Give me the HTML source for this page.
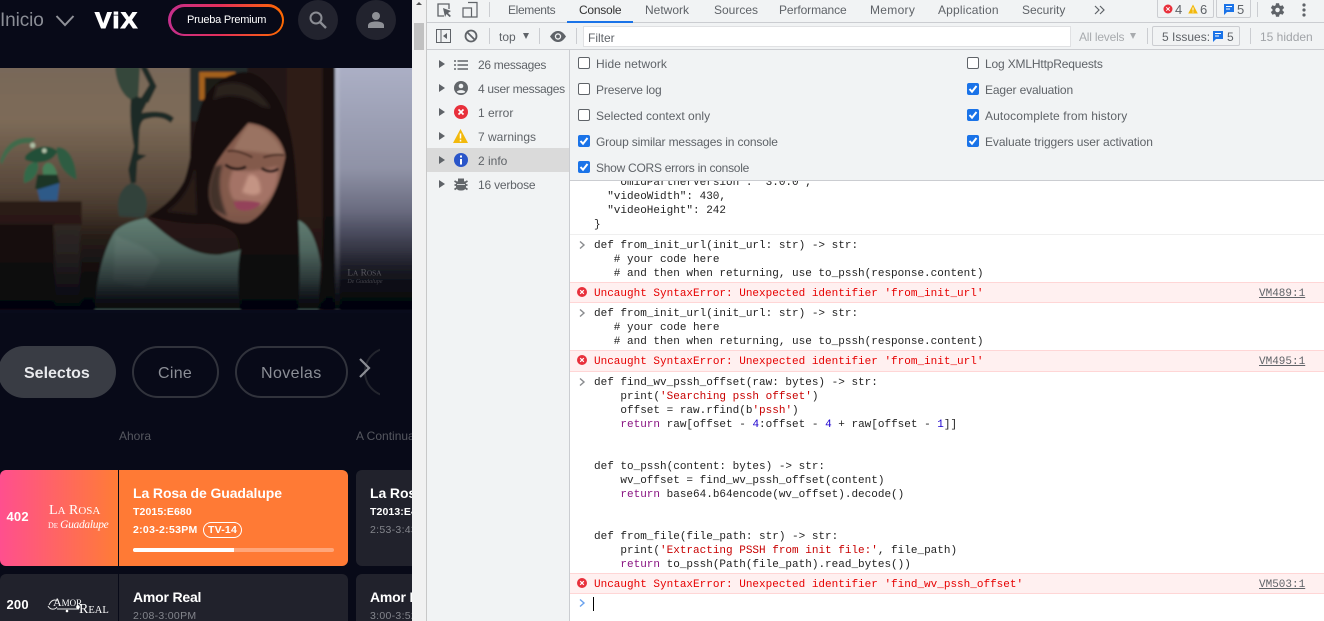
<!DOCTYPE html>
<html><head><meta charset="utf-8">
<style>
html,body{margin:0;padding:0;width:1324px;height:621px;overflow:hidden;background:#fff}
*{box-sizing:border-box}
.a,.t,.m,.s{position:absolute}
.t,.s,.m{white-space:pre}
.s{font:12px/16px "Liberation Sans",sans-serif;color:#5f6368}
.m{font:11px/14px "Liberation Mono",monospace;color:#222;left:594px}
.m b{font-weight:normal;color:#881280}
.m i{font-style:normal;color:#c80000}
.m u{text-decoration:none;color:#1c00cf}
.t{font-family:"Liberation Sans",sans-serif}
.box{position:absolute;width:12px;height:12px;border:1px solid #5f6368;border-radius:2px;background:#fff}
.ck{position:absolute;width:12px;height:12px;border-radius:2px;background:#1a73e8}
.ck svg{display:block}
.err{position:absolute;left:570px;width:754px;background:#fff0f0;border-top:1px solid #ffd6d6;border-bottom:1px solid #ffd6d6}
.tri{position:absolute;left:439px;width:0;height:0;border-left:6px solid #5f6368;border-top:4px solid transparent;border-bottom:4px solid transparent}
.line{position:absolute;background:#cbcdd1}
</style></head><body>

<!-- LEFT SITE -->
<div class="a" style="left:0;top:0;width:412px;height:621px;background:#080a18;overflow:hidden">
  <svg class="a" style="left:0;top:68px" width="412" height="245" viewBox="0 0 1236 735">
    <defs>
      <linearGradient id="wall" x1="0" y1="0" x2="0" y2="1"><stop offset="0" stop-color="#78685a"/><stop offset=".22" stop-color="#7d6b58"/><stop offset=".5" stop-color="#57473a"/><stop offset=".7" stop-color="#2c2119"/><stop offset="1" stop-color="#0e0a0a"/></linearGradient>
      <linearGradient id="win" x1="0" y1="0" x2="0" y2="1"><stop offset="0" stop-color="#acb0c6"/><stop offset=".42" stop-color="#8f92a6"/><stop offset=".68" stop-color="#55566a"/><stop offset=".88" stop-color="#202028"/><stop offset="1" stop-color="#08080e"/></linearGradient>
      <linearGradient id="fade" x1="0" y1="0" x2="0" y2="1"><stop offset="0" stop-color="#05060e" stop-opacity="0"/><stop offset=".6" stop-color="#05060e" stop-opacity="0"/><stop offset=".76" stop-color="#05060e" stop-opacity=".25"/><stop offset=".88" stop-color="#05060e" stop-opacity=".62"/><stop offset=".97" stop-color="#05060e" stop-opacity=".96"/><stop offset="1" stop-color="#05060e" stop-opacity="1"/></linearGradient>
      <filter id="b4"><feGaussianBlur stdDeviation="4"/></filter>
      <filter id="all" x="-2%" y="-2%" width="104%" height="104%"><feGaussianBlur stdDeviation="3.500"/></filter>
    </defs>
    <g filter="url(#all)">
      <rect x="-10" y="-10" width="610" height="745" fill="url(#wall)"/>
      <rect x="570" y="-10" width="450" height="745" fill="#241512"/>
      <rect x="860" y="-10" width="105" height="745" fill="#2e1c17"/>
      <rect x="970" y="-10" width="40" height="745" fill="#120c0b"/>
      <rect x="1005" y="-10" width="240" height="745" fill="url(#win)"/>
      <rect x="1005" y="-10" width="14" height="745" fill="#c8ccd8" opacity=".3"/>
      <rect x="572" y="-10" width="170" height="170" fill="#232b2b"/>
      <rect x="598" y="12" width="108" height="84" fill="#a4601c"/>
      <rect x="614" y="28" width="90" height="70" fill="#1b1a18"/>
      <!-- table -->
      <rect x="-10" y="400" width="255" height="72" fill="#2b1a14"/>
      <rect x="-10" y="470" width="170" height="265" fill="#1a110e"/>
      <rect x="165" y="470" width="75" height="250" fill="#332a27" filter="url(#b4)"/>
      <!-- statue -->
      <g fill="#1f2c26">
        <path d="M345 -5 C348 40 365 80 392 95 L415 85 L420 -5Z" fill="#36463a"/>
        <path d="M440 -5 L470 55 L445 105 L420 95 L448 50 L420 -5Z"/>
        <path d="M392 95 C388 150 395 200 402 235 L385 305 L392 345 L408 345 L412 280 L440 262 L415 258 L418 190 C420 170 425 160 432 155 C460 145 490 145 512 165 L522 150 C500 128 460 128 425 135 L445 95 L410 85Z"/>
      </g>
      <path d="M358 445 C345 400 362 355 395 345 C440 355 452 410 430 450Z" fill="#31423b"/>
      <!-- plant -->
      <path d="M0 280 C15 225 55 200 108 212 L88 226 C55 222 22 245 6 290Z" fill="#3f6a4c"/>
      <path d="M72 345 C68 305 85 280 112 282 C122 310 100 340 72 345Z" fill="#33694a"/>
      <path d="M128 300 C140 270 165 285 172 322 C165 348 145 352 130 338Z" fill="#447f59"/>
      <path d="M170 238 C202 235 226 270 230 335 C198 322 170 290 170 238Z" fill="#2e5c42"/>
      <path d="M75 265 C100 235 150 225 172 250 C160 282 110 292 75 275Z" fill="#234f38"/>
      <path d="M105 362 L112 320 L172 320 L180 345 L125 368Z" fill="#1b3527"/>
      <circle cx="98" cy="232" r="8" fill="#aebfa5"/><circle cx="133" cy="248" r="7" fill="#b5c4ac"/>
      <path d="M112 365 L178 345 L172 398 L120 398Z" fill="#2d5a88"/>
      <!-- sweater -->
      <path d="M285 735 C285 640 312 540 345 490 C370 465 410 455 440 450 C490 490 560 565 660 560 L715 548 L890 455 C925 465 950 510 962 590 L955 735Z" fill="#668478"/>
      <path d="M345 500 C380 520 440 530 480 580 L430 660 L340 640Z" fill="#7b978c" opacity=".5" filter="url(#b4)"/>
      <!-- neck -->
      <path d="M440 452 C490 490 560 565 660 558 L718 545 L700 470 L600 430 L470 430Z" fill="#2b1913"/>
      <!-- hair -->
      <path d="M735 12 C665 15 612 70 598 130 C578 200 572 290 552 340 C525 390 485 420 445 445 C500 462 565 468 620 468 C690 470 722 500 722 545 C710 600 715 680 722 735 L893 735 C905 620 897 460 888 330 C882 230 865 130 820 70 C795 35 770 15 735 12Z" fill="#171010"/>
      <path d="M650 55 C705 28 770 50 812 120 L785 115 C745 85 685 72 640 95Z" fill="#2c231f" filter="url(#b4)"/>
      <path d="M500 430 C545 400 570 360 585 300 L590 440Z" fill="#2c1d18" filter="url(#b4)"/>
      <!-- face -->
      <path d="M745 165 C700 215 662 260 645 295 C628 340 618 385 640 425 C670 458 712 470 745 464 C792 442 832 380 856 268 C852 220 812 170 745 165Z" fill="#835a4c"/>
      <path d="M745 170 C790 172 835 210 852 262 L700 245 C715 215 730 190 745 170Z" fill="#9a7362" filter="url(#b4)"/>
      <path d="M700 305 C740 315 790 305 832 295 C840 345 812 400 782 412 L700 395 C680 360 688 330 700 305Z" fill="#a47366" filter="url(#b4)"/>
      <path d="M745 322 C770 312 782 342 782 372 C770 386 745 382 726 372Z" fill="#c49484" filter="url(#b4)"/>
      <path d="M645 295 C628 340 618 385 640 425 L682 445 C656 385 652 335 668 290Z" fill="#42302a" filter="url(#b4)"/>
      <path d="M682 250 C702 245 732 255 757 268" stroke="#3a2119" stroke-width="5" fill="none"/>
      <path d="M790 268 C810 262 835 258 852 262" stroke="#3a2119" stroke-width="5" fill="none"/>
      <path d="M676 290 C695 306 720 306 738 296" stroke="#130c0c" stroke-width="8" fill="none"/>
      <path d="M785 300 C800 313 820 313 835 302" stroke="#130c0c" stroke-width="8" fill="none"/>
      <path d="M700 402 C720 397 760 397 782 405 C765 430 725 434 708 420Z" fill="#94425a"/>
      <rect x="-10" y="-10" width="1256" height="735" fill="url(#fade)"/>
    </g>
    <rect y="725" width="1236" height="10" fill="#090b1b"/>
    <text x="1042" y="622" font-family="Liberation Serif,serif" font-size="28" fill="#8c8c90" opacity=".55">L<tspan font-size="22">A</tspan> R<tspan font-size="22">OSA</tspan></text>
    <text x="1042" y="645" font-family="Liberation Serif,serif" font-size="18" font-style="italic" fill="#77777c" opacity=".5">De Guadalupe</text>
  </svg>

  <!-- top bar -->
  <div class="a" style="left:0;top:0;width:412px;height:68px;background:#080a18"></div>
  <div class="t" style="left:0;top:9px;font-size:19px;line-height:24px;color:#8b8e96;letter-spacing:-.1px">Inicio</div>
  <svg class="a" style="left:55px;top:14px" width="20" height="13"><path d="M1.500 2 L10 11 L18.500 2" stroke="#8f9198" stroke-width="2" fill="none"/></svg>
  <div class="t" style="left:95px;top:8px;font-size:22px;line-height:26px;font-weight:bold;color:#fff;-webkit-text-stroke:1px #fff;letter-spacing:1.300px;transform:scaleX(1.12);transform-origin:left">ViX</div>
  <div class="a" style="left:168px;top:4px;width:116px;height:32px;border-radius:16px;background:linear-gradient(90deg,#c42f8c 0%,#e42f5a 45%,#ff6a00 100%)"></div>
  <div class="a" style="left:170.500px;top:6.500px;width:111px;height:27px;border-radius:14px;background:#080a18"></div>
  <div class="t" style="left:187px;top:13px;font-size:11px;line-height:14px;color:#fff;letter-spacing:-.24px">Prueba Premium</div>
  <div class="a" style="left:298px;top:0;width:40px;height:40px;border-radius:50%;background:#22232e"></div>
  <svg class="a" style="left:308px;top:10px" width="20" height="20"><circle cx="8" cy="8" r="5.500" stroke="#8b8d94" stroke-width="2" fill="none"/><path d="M12 12 L18 18" stroke="#8b8d94" stroke-width="2.400"/></svg>
  <div class="a" style="left:356px;top:0;width:40px;height:40px;border-radius:50%;background:#22232e"></div>
  <svg class="a" style="left:367px;top:11px" width="18" height="18"><circle cx="9" cy="5" r="4" fill="#8e9096"/><path d="M1 17 V14.500 C1 11.500 5 10.500 9 10.500 C13 10.500 17 11.500 17 14.500 V17Z" fill="#8e9096"/></svg>

  <!-- chips -->
  <div class="a" style="left:-2px;top:346px;width:118px;height:52px;border-radius:26px;background:#393c44"></div>
  <div class="t" style="left:24px;top:365px;font-size:16px;line-height:18px;font-weight:bold;color:#e8e9ec">Selectos</div>
  <div class="a" style="left:132px;top:346px;width:87px;height:52px;border-radius:26px;border:2px solid #31333c"></div>
  <div class="t" style="left:158px;top:365px;font-size:16px;line-height:18px;color:#8b8e96;letter-spacing:.3px">Cine</div>
  <div class="a" style="left:235px;top:346px;width:113px;height:52px;border-radius:26px;border:2px solid #31333c"></div>
  <div class="t" style="left:261px;top:365px;font-size:16px;line-height:18px;color:#8b8e96;letter-spacing:.4px">Novelas</div>
  <div class="a" style="left:364px;top:347px;width:16px;height:50px;overflow:hidden"><div style="width:60px;height:50px;border-radius:25px;border:2px solid #23252e"></div></div>
  <svg class="a" style="left:358px;top:357px" width="14" height="22"><path d="M2 2 L11 11 L2 20" stroke="#8c8e95" stroke-width="2.200" fill="none"/></svg>

  <div class="t" style="left:119px;top:428px;font-size:12px;line-height:16px;color:#55575f">Ahora</div>
  <div class="t" style="left:356px;top:428px;font-size:12px;line-height:16px;color:#55575f">A Continuación</div>

  <!-- row 1 -->
  <div class="a" style="left:0;top:470px;width:118px;height:96px;border-radius:6px 0 0 6px;background:linear-gradient(90deg,#ff4f8e,#ff7c36)"></div>
  <div class="a" style="left:119px;top:470px;width:229px;height:96px;border-radius:0 6px 6px 0;background:#ff7a35"></div>
  <div class="t" style="left:6.500px;top:509px;font-size:13px;line-height:16px;font-weight:bold;color:#fff;letter-spacing:.2px">402</div>
  <div class="t" style="left:49px;top:503px;font-family:'Liberation Serif',serif;font-size:14px;line-height:16px;color:#fff">L<span style="font-size:11px">A</span> R<span style="font-size:11px">OSA</span></div>
  <div class="t" style="left:48px;top:519px;font-family:'Liberation Serif',serif;font-size:8px;line-height:12px;color:#fff">D<span style="font-size:7px">E</span> <span style="font-size:11.500px;font-style:italic;letter-spacing:-.3px">Guadalupe</span></div>
  <div class="t" style="left:133px;top:484px;font-size:14px;line-height:18px;font-weight:bold;color:#fff;letter-spacing:-.1px">La Rosa de Guadalupe</div>
  <div class="t" style="left:133px;top:505px;font-size:10.500px;line-height:14px;font-weight:bold;color:#fff;letter-spacing:.1px">T2015:E680</div>
  <div class="t" style="left:133px;top:523px;font-size:10.500px;line-height:14px;font-weight:bold;color:#fff;letter-spacing:.3px">2:03-2:53PM</div>
  <div class="t" style="left:203px;top:522px;width:39px;height:16px;border:1px solid #fff;border-radius:8px;font-size:10.500px;line-height:15px;text-align:center;font-weight:bold;color:#fff;letter-spacing:.2px">TV-14</div>
  <div class="a" style="left:133px;top:548px;width:201px;height:4px;border-radius:2px;background:#ffa67a"></div>
  <div class="a" style="left:133px;top:548px;width:101px;height:4px;border-radius:2px 0 0 2px;background:#fff"></div>
  <!-- row 1 right -->
  <div class="a" style="left:356px;top:470px;width:230px;height:96px;border-radius:6px;background:#21222c"></div>
  <div class="t" style="left:370px;top:484px;font-size:14px;line-height:18px;font-weight:bold;color:#fff;letter-spacing:-.1px">La Rosa de Guadalupe</div>
  <div class="t" style="left:370px;top:505px;font-size:10.500px;line-height:14px;font-weight:bold;color:#fff;letter-spacing:.1px">T2013:E401</div>
  <div class="t" style="left:370px;top:523px;font-size:10.500px;line-height:14px;color:#83858c;letter-spacing:.3px">2:53-3:43PM</div>
  <!-- row 2 -->
  <div class="a" style="left:0;top:574px;width:118px;height:60px;border-radius:6px 0 0 0;background:#21222c"></div>
  <div class="a" style="left:119px;top:574px;width:229px;height:60px;border-radius:0 6px 0 0;background:#21222c"></div>
  <div class="t" style="left:6.500px;top:597px;font-size:13px;line-height:16px;font-weight:bold;color:#fff;letter-spacing:.2px">200</div>
  <div class="t" style="left:53px;top:595px;font-family:'Liberation Serif',serif;font-size:12px;line-height:14px;color:#fff">A<span style="font-size:9px">MOR</span></div>
  <div class="t" style="left:79px;top:603px;font-family:'Liberation Serif',serif;font-size:14px;line-height:14px;color:#fff">R<span style="font-size:10.500px">EAL</span></div>
  <svg class="a" style="left:47px;top:597px" width="42" height="20"><path d="M2 8 C4 3 8 2 10 4 M1 9 C3 13 8 13 10 10 M10 12 L32 12" stroke="#e8e8e8" stroke-width="1" fill="none"/><circle cx="20" cy="14" r="1.300" fill="#fff"/><circle cx="31" cy="10" r="1.800" fill="#fff"/></svg>
  <div class="t" style="left:133px;top:588px;font-size:14px;line-height:18px;font-weight:bold;color:#fff;letter-spacing:-.2px">Amor Real</div>
  <div class="t" style="left:133px;top:609px;font-size:10.500px;line-height:14px;color:#83858c;letter-spacing:.3px">2:08-3:00PM</div>
  <div class="a" style="left:356px;top:574px;width:230px;height:60px;border-radius:6px;background:#21222c"></div>
  <div class="t" style="left:370px;top:588px;font-size:14px;line-height:18px;font-weight:bold;color:#fff;letter-spacing:-.2px">Amor Real</div>
  <div class="t" style="left:370px;top:609px;font-size:10.500px;line-height:14px;color:#83858c;letter-spacing:.3px">3:00-3:52PM</div>
</div>

<!-- scrollbar -->
<div class="a" style="left:412px;top:0;width:14px;height:621px;background:#f1f1f1"></div>
<div class="a" style="left:414px;top:23px;width:10px;height:27px;background:#c1c1c1"></div>
<div class="a" style="left:416px;top:2px;width:0;height:0;border-left:3px solid transparent;border-right:3px solid transparent;border-bottom:3px solid #505050"></div>
<div class="line" style="left:426px;top:0;width:1px;height:621px;background:#c8c8c8"></div>

<!-- DEVTOOLS -->
<div class="a" style="left:427px;top:0;width:897px;height:181px;background:#f1f3f4"></div>
<div class="a" style="left:427px;top:49px;width:143px;height:572px;background:#f1f3f4"></div>
<div class="line" style="left:427px;top:22px;width:897px;height:1px"></div>
<div class="line" style="left:427px;top:49px;width:897px;height:1px"></div>
<div class="line" style="left:569px;top:50px;width:1px;height:571px"></div>
<div class="line" style="left:570px;top:180px;width:754px;height:1px"></div>

<!-- top tabs -->
<svg class="a" style="left:436px;top:2px" width="16" height="16"><path d="M8 14 H2 V2 H13 V7" stroke="#5f6368" stroke-width="1.300" fill="none"/><path d="M7 6 L15 9 L12 11 L15 14 L13.500 15 L10.500 12 L9 15Z" fill="#5f6368"/></svg>
<svg class="a" style="left:462px;top:1px" width="16" height="17"><path d="M6 1.500 H15 V16 H10 M1 7 H9.500 V16 H1Z" stroke="#5f6368" stroke-width="1.200" fill="none"/></svg>
<div class="line" style="left:489px;top:2px;width:1px;height:15px"></div>
<div class="s" style="left:508px;top:2px;letter-spacing:-.35px">Elements</div>
<div class="s" style="left:579px;top:2px;color:#333;letter-spacing:-.25px">Console</div>
<div class="a" style="left:567px;top:21px;width:66px;height:2px;background:#1a73e8"></div>
<div class="s" style="left:645px;top:2px">Network</div>
<div class="s" style="left:714px;top:2px">Sources</div>
<div class="s" style="left:779px;top:2px;letter-spacing:-.1px">Performance</div>
<div class="s" style="left:870px;top:2px;letter-spacing:.3px">Memory</div>
<div class="s" style="left:938px;top:2px;letter-spacing:.18px">Application</div>
<div class="s" style="left:1022px;top:2px">Security</div>
<svg class="a" style="left:1094px;top:5px" width="11" height="10"><path d="M1 1 L5 5 L1 9 M6 1 L10 5 L6 9" stroke="#5f6368" stroke-width="1.200" fill="none"/></svg>

<div class="a" style="left:1157px;top:-2px;width:57px;height:20px;border:1px solid #cbcdd1;border-radius:2px"></div>
<svg class="a" style="left:1163px;top:4px" width="10" height="10"><circle cx="5" cy="5" r="4.500" fill="#e8303b"/><path d="M3.300 3.300 L6.700 6.700 M6.700 3.300 L3.300 6.700" stroke="#fff" stroke-width="1"/></svg>
<div class="s" style="left:1175px;top:2px;font-size:13px">4</div>
<svg class="a" style="left:1188px;top:4px" width="10" height="10"><path d="M5 .5 L9.800 9.500 H.2Z" fill="#f2b90c"/><path d="M5 3.500 V6.500 M5 7.500 V8.500" stroke="#fff" stroke-width="1"/></svg>
<div class="s" style="left:1200px;top:2px;font-size:13px">6</div>
<div class="a" style="left:1216px;top:-2px;width:35px;height:20px;border:1px solid #cbcdd1;border-radius:2px"></div>
<svg class="a" style="left:1223px;top:3px" width="12" height="13"><path d="M1 1 H11 V9 H4 L1 12Z" fill="#1a73e8"/><path d="M3 3.500 H9 M3 6 H7" stroke="#fff" stroke-width="1"/></svg>
<div class="s" style="left:1237px;top:2px;font-size:13px">5</div>
<div class="line" style="left:1257px;top:2px;width:1px;height:15px"></div>
<svg class="a" style="left:1267.500px;top:1px" width="18" height="18" viewBox="0 0 24 24"><path fill="#5f6368" d="M19.400 13a7.500 7.500 0 0 0 0-2l2.200-1.700-2.100-3.600-2.600 1a7.500 7.500 0 0 0-1.700-1L14.800 3h-4.200l-.4 2.700a7.500 7.500 0 0 0-1.700 1l-2.600-1-2.100 3.600L6 11a7.500 7.500 0 0 0 0 2l-2.200 1.700 2.100 3.600 2.600-1a7.500 7.500 0 0 0 1.700 1l.4 2.700h4.200l.4-2.700a7.500 7.500 0 0 0 1.700-1l2.600 1 2.100-3.600zM12.700 15a3 3 0 1 1 0-6 3 3 0 0 1 0 6z"/></svg>
<svg class="a" style="left:1302px;top:3px" width="4" height="14"><circle cx="2" cy="2" r="1.600" fill="#5f6368"/><circle cx="2" cy="7" r="1.600" fill="#5f6368"/><circle cx="2" cy="12" r="1.600" fill="#5f6368"/></svg>

<!-- toolbar -->
<svg class="a" style="left:436px;top:29px" width="16" height="15"><path d="M.5 .5 H14.500 V13.500 H.5Z M5 .5 V13.500" stroke="#5f6368" stroke-width="1" fill="none"/><path d="M11 4 L7 7 L11 10Z" fill="#5f6368"/></svg>
<svg class="a" style="left:464px;top:29px" width="14" height="14"><circle cx="7" cy="7" r="5.500" stroke="#5f6368" stroke-width="1.800" fill="none"/><path d="M3 3 L11 11" stroke="#5f6368" stroke-width="1.800"/></svg>
<div class="line" style="left:489px;top:28px;width:1px;height:16px"></div>
<div class="s" style="left:499px;top:29px">top</div>
<div class="a" style="left:523px;top:33px;width:0;height:0;border-left:3.500px solid transparent;border-right:3.500px solid transparent;border-top:6px solid #5f6368"></div>
<div class="line" style="left:539px;top:28px;width:1px;height:16px"></div>
<svg class="a" style="left:550px;top:31px" width="16" height="11"><path d="M0 5.500 C3 1 5.500 0 8 0 C10.500 0 13 1 16 5.500 C13 10 10.500 11 8 11 C5.500 11 3 10 0 5.500Z" fill="#5f6368"/><circle cx="8" cy="5.500" r="3.200" fill="#f1f3f4"/><circle cx="8" cy="5.500" r="1.900" fill="#5f6368"/></svg>
<div class="line" style="left:576px;top:28px;width:1px;height:16px"></div>
<div class="a" style="left:583px;top:26px;width:488px;height:21px;background:#fff;border:1px solid #e0e1e3"></div>
<div class="s" style="left:588px;top:30px">Filter</div>
<div class="s" style="left:1079px;top:29px;color:#a8abae;letter-spacing:-.2px">All levels</div>
<div class="a" style="left:1130px;top:33px;width:0;height:0;border-left:3.500px solid transparent;border-right:3.500px solid transparent;border-top:6px solid #a8abae"></div>
<div class="line" style="left:1147px;top:28px;width:1px;height:16px"></div>
<div class="a" style="left:1152px;top:26px;width:88px;height:20px;border:1px solid #cbcdd1;border-radius:2px"></div>
<div class="s" style="left:1162px;top:29px">5 Issues:</div>
<svg class="a" style="left:1212px;top:30px" width="12" height="13"><path d="M1 1 H11 V9 H4 L1 12Z" fill="#1a73e8"/><path d="M3 3.500 H9 M3 6 H7" stroke="#fff" stroke-width="1"/></svg>
<div class="s" style="left:1227px;top:29px">5</div>
<div class="line" style="left:1250px;top:28px;width:1px;height:16px"></div>
<div class="s" style="left:1260px;top:29px;color:#a1a4a8">15 hidden</div>

<!-- sidebar -->
<div class="a" style="left:427px;top:148px;width:142px;height:24px;background:#dadada"></div>
<div class="tri" style="top:60px"></div><div class="tri" style="top:84px"></div><div class="tri" style="top:108px"></div><div class="tri" style="top:132px"></div><div class="tri" style="top:156px"></div><div class="tri" style="top:180px"></div>
<svg class="a" style="left:454px;top:59px" width="14" height="12"><path d="M0 2 H2 M3.500 2 H14 M0 6 H2 M3.500 6 H14 M0 10 H2 M3.500 10 H14" stroke="#85888c" stroke-width="2"/></svg>
<svg class="a" style="left:454px;top:81px" width="14" height="14"><circle cx="7" cy="7" r="7" fill="#62666a"/><circle cx="7" cy="5" r="2.300" fill="#f1f3f4"/><path d="M2.800 11 C3.500 8.500 10.500 8.500 11.200 11 C10 12.500 4 12.500 2.800 11Z" fill="#f1f3f4"/></svg>
<svg class="a" style="left:454px;top:105px" width="14" height="14"><circle cx="7" cy="7" r="7" fill="#e8303b"/><path d="M4.500 4.500 L9.500 9.500 M9.500 4.500 L4.500 9.500" stroke="#fff" stroke-width="1.700"/></svg>
<svg class="a" style="left:453px;top:129px" width="15" height="14"><path d="M7.500 0 L15 14 H0Z" fill="#f2b90c"/><path d="M7.500 4.500 V9.500 M7.500 10.800 V12.500" stroke="#fff" stroke-width="1.500"/></svg>
<svg class="a" style="left:454px;top:153px" width="14" height="14"><circle cx="7" cy="7" r="7" fill="#2a55c9"/><path d="M7 6 V11.500 M7 2.500 V4.500" stroke="#fff" stroke-width="2"/></svg>
<svg class="a" style="left:454px;top:177px" width="14" height="14"><path d="M4 1.500 H10 V5 H4Z" fill="#62666a"/><rect x="2" y="3.500" width="10" height="10" rx="4" fill="#62666a"/><path d="M.5 4 L3 5.500 M13.500 4 L11 5.500 M.5 8 H3 M13.500 8 H11 M.5 12.500 L3.500 10.500 M13.500 12.500 L10.500 10.500" stroke="#62666a" stroke-width="1.800"/><path d="M3 7.500 H11" stroke="#f1f3f4" stroke-width=".8"/></svg>
<div class="s" style="left:478px;top:57px;letter-spacing:-.3px">26 messages</div>
<div class="s" style="left:478px;top:81px;letter-spacing:-.3px">4 user messages</div>
<div class="s" style="left:478px;top:105px">1 error</div>
<div class="s" style="left:478px;top:129px">7 warnings</div>
<div class="s" style="left:478px;top:153px">2 info</div>
<div class="s" style="left:478px;top:177px;letter-spacing:-.2px">16 verbose</div>

<!-- settings -->
<div class="box" style="left:578px;top:57px"></div><div class="s" style="left:596px;top:56px;letter-spacing:.08px">Hide network</div>
<div class="box" style="left:578px;top:83px"></div><div class="s" style="left:596px;top:82px;letter-spacing:-.15px">Preserve log</div>
<div class="box" style="left:578px;top:109px"></div><div class="s" style="left:596px;top:108px">Selected context only</div>
<div class="ck" style="left:578px;top:135px"><svg width="12" height="12"><path d="M2.500 6 L5 8.700 L9.500 3" stroke="#fff" stroke-width="2" fill="none"/></svg></div><div class="s" style="left:596px;top:134px;letter-spacing:-.15px">Group similar messages in console</div>
<div class="ck" style="left:578px;top:161px"><svg width="12" height="12"><path d="M2.500 6 L5 8.700 L9.500 3" stroke="#fff" stroke-width="2" fill="none"/></svg></div><div class="s" style="left:596px;top:160px;letter-spacing:-.26px">Show CORS errors in console</div>
<div class="box" style="left:967px;top:57px"></div><div class="s" style="left:985px;top:56px;letter-spacing:-.16px">Log XMLHttpRequests</div>
<div class="ck" style="left:967px;top:83px"><svg width="12" height="12"><path d="M2.500 6 L5 8.700 L9.500 3" stroke="#fff" stroke-width="2" fill="none"/></svg></div><div class="s" style="left:985px;top:82px;letter-spacing:-.13px">Eager evaluation</div>
<div class="ck" style="left:967px;top:109px"><svg width="12" height="12"><path d="M2.500 6 L5 8.700 L9.500 3" stroke="#fff" stroke-width="2" fill="none"/></svg></div><div class="s" style="left:985px;top:108px;letter-spacing:.12px">Autocomplete from history</div>
<div class="ck" style="left:967px;top:135px"><svg width="12" height="12"><path d="M2.500 6 L5 8.700 L9.500 3" stroke="#fff" stroke-width="2" fill="none"/></svg></div><div class="s" style="left:985px;top:134px;letter-spacing:-.09px">Evaluate triggers user activation</div>

<!-- console -->
<div class="a" style="left:570px;top:181px;width:754px;height:440px;overflow:hidden;background:#fff"></div>
<div class="a" style="left:570px;top:181px;width:754px;height:10px;overflow:hidden"><div class="m" style="left:43.800px;top:-5px">"omidPartnerVersion": "3.0.0",</div></div>
<div class="m" style="left:607.200px;top:190px">"videoWidth": 430,</div>
<div class="m" style="left:607.200px;top:204px">"videoHeight": 242</div>
<div class="m" style="top:218px">}</div>
<div class="a" style="left:570px;top:234px;width:754px;height:1px;background:#efefef"></div>

<svg class="a" style="left:579px;top:241px" width="7" height="8"><path d="M1 .5 L5 4 L1 7.500" stroke="#8a8c8f" stroke-width="1.400" fill="none"/></svg>
<div class="m" style="top:239px">def from_init_url(init_url: str) -&gt; str:
   # your code here
   # and then when returning, use to_pssh(response.content)</div>
<div class="err" style="top:282px;height:21px"></div>
<svg class="a" style="left:577px;top:287px" width="10" height="10"><circle cx="5" cy="5" r="5" fill="#e8303b"/><path d="M3.200 3.200 L6.800 6.800 M6.800 3.200 L3.200 6.800" stroke="#fff" stroke-width="1.200"/></svg>
<div class="m" style="top:287px;color:#e60000">Uncaught SyntaxError: Unexpected identifier 'from_init_url'</div>
<div class="m" style="left:1259px;top:287px;color:#5f6368;text-decoration:underline">VM489:1</div>

<svg class="a" style="left:579px;top:309px" width="7" height="8"><path d="M1 .5 L5 4 L1 7.500" stroke="#8a8c8f" stroke-width="1.400" fill="none"/></svg>
<div class="m" style="top:307px">def from_init_url(init_url: str) -&gt; str:
   # your code here
   # and then when returning, use to_pssh(response.content)</div>
<div class="err" style="top:350px;height:22px"></div>
<svg class="a" style="left:577px;top:355px" width="10" height="10"><circle cx="5" cy="5" r="5" fill="#e8303b"/><path d="M3.200 3.200 L6.800 6.800 M6.800 3.200 L3.200 6.800" stroke="#fff" stroke-width="1.200"/></svg>
<div class="m" style="top:355px;color:#e60000">Uncaught SyntaxError: Unexpected identifier 'from_init_url'</div>
<div class="m" style="left:1259px;top:355px;color:#5f6368;text-decoration:underline">VM495:1</div>

<svg class="a" style="left:579px;top:378px" width="7" height="8"><path d="M1 .5 L5 4 L1 7.500" stroke="#8a8c8f" stroke-width="1.400" fill="none"/></svg>
<div class="m" style="top:376px">def find_wv_pssh_offset(raw: bytes) -&gt; str:
    print(<i>'Searching pssh offset'</i>)
    offset = raw.rfind(b<i>'pssh'</i>)
    <b>return</b> raw[offset - <u>4</u>:offset - <u>4</u> + raw[offset - <u>1</u>]]


def to_pssh(content: bytes) -&gt; str:
    wv_offset = find_wv_pssh_offset(content)
    <b>return</b> base64.b64encode(wv_offset).decode()


def from_file(file_path: str) -&gt; str:
    print(<i>'Extracting PSSH from init file:'</i>, file_path)
    <b>return</b> to_pssh(Path(file_path).read_bytes())</div>
<div class="err" style="top:573px;height:21px"></div>
<svg class="a" style="left:577px;top:578px" width="10" height="10"><circle cx="5" cy="5" r="5" fill="#e8303b"/><path d="M3.200 3.200 L6.800 6.800 M6.800 3.200 L3.200 6.800" stroke="#fff" stroke-width="1.200"/></svg>
<div class="m" style="top:578px;color:#e60000">Uncaught SyntaxError: Unexpected identifier 'find_wv_pssh_offset'</div>
<div class="m" style="left:1259px;top:578px;color:#5f6368;text-decoration:underline">VM503:1</div>
<svg class="a" style="left:579px;top:599px" width="7" height="8"><path d="M1 .5 L5 4 L1 7.500" stroke="#6aa2ee" stroke-width="1.400" fill="none"/></svg>
<div class="a" style="left:593px;top:597px;width:1px;height:14px;background:#000"></div>
</body></html>
